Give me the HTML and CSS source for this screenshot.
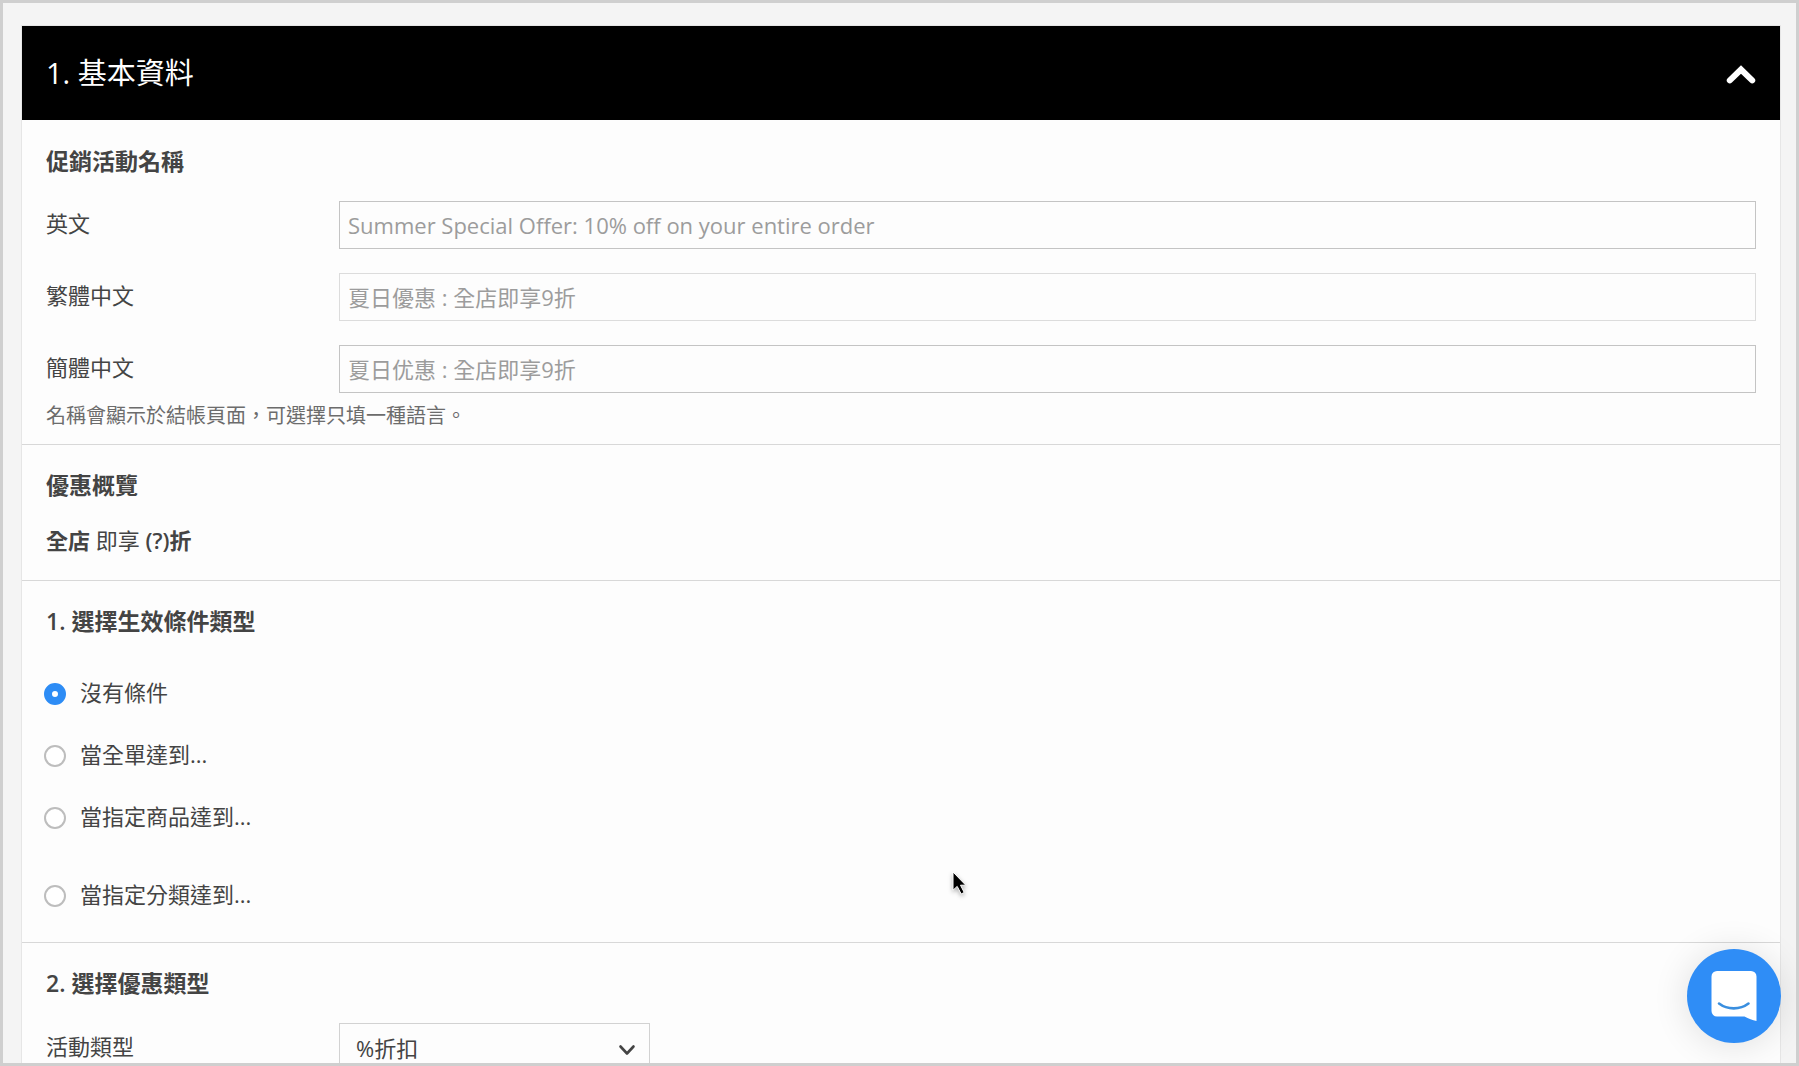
FILE: index.html
```html
<!DOCTYPE html>
<html lang="zh-Hant">
<head>
<meta charset="utf-8">
<meta name="viewport" content="width=device-width, initial-scale=1">
<title>基本資料</title>
<link rel="stylesheet" href="styles.css">
</head>
<body>
<main class="frame">
  <form class="panel">
    <header class="panel-header">
      <h1 class="panel-title">1. 基本資料</h1>
      <button class="collapse" type="button" aria-label="收合">
        <svg width="30" height="20" viewBox="0 0 30 20" aria-hidden="true"><path d="M3.800 15.400 15 4.500 26.200 15.400" fill="none" stroke="#fff" stroke-width="6" stroke-linecap="round" stroke-linejoin="miter"/></svg>
      </button>
    </header>

    <section class="section names">
      <h2 class="heading">促銷活動名稱</h2>
      <div class="fields">
        <div class="row">
          <label class="label" for="name-en">英文</label>
          <input class="text-box" id="name-en" type="text" placeholder="Summer Special Offer: 10% off on your entire order">
        </div>
        <div class="row">
          <label class="label" for="name-tc">繁體中文</label>
          <input class="text-box light" id="name-tc" type="text" placeholder="夏日優惠 : 全店即享9折">
        </div>
        <div class="row">
          <label class="label" for="name-sc">簡體中文</label>
          <input class="text-box" id="name-sc" type="text" placeholder="夏日优惠 : 全店即享9折">
        </div>
      </div>
      <p class="hint">名稱會顯示於結帳頁面，可選擇只填一種語言。</p>
    </section>

    <section class="section overview">
      <h2 class="heading">優惠概覽</h2>
      <p class="summary"><strong>全店</strong> 即享 <strong>(?)折</strong></p>
    </section>

    <section class="section conditions">
      <h2 class="heading">1. 選擇生效條件類型</h2>
      <div class="options">
        <label class="option"><input class="radio" type="radio" name="condition" checked>沒有條件</label>
        <label class="option"><input class="radio" type="radio" name="condition">當全單達到...</label>
        <label class="option"><input class="radio" type="radio" name="condition">當指定商品達到...</label>
        <label class="option spaced"><input class="radio" type="radio" name="condition">當指定分類達到...</label>
      </div>
    </section>

    <section class="section">
      <h2 class="heading">2. 選擇優惠類型</h2>
      <div class="row">
        <label class="label" for="promo-type">活動類型</label>
        <div class="select-wrap">
          <select class="select" id="promo-type"><option>%折扣</option></select>
          <svg class="select-arrow" width="18" height="12" viewBox="0 0 18 12" aria-hidden="true"><path d="M2.500 2.500 9 9.500 15.500 2.500" fill="none" stroke="#444" stroke-width="2.600" stroke-linecap="round" stroke-linejoin="round"/></svg>
        </div>
      </div>
    </section>
  </form>

  <button class="chat" type="button" aria-label="線上客服">
    <svg width="46" height="50" viewBox="0 0 46 50" aria-hidden="true">
      <path d="M6 0h34a5.500 5.500 0 0 1 5.500 5.500V50c-4-.8-8-2.300-12-4.500H6A5.500 5.500 0 0 1 .5 40V5.500A5.500 5.500 0 0 1 6 0z" fill="#fff"/>
      <path d="M8 32.500c8.500 6.500 21 6.500 29.500 0" fill="none" stroke="#3a8fdf" stroke-width="2.600" stroke-linecap="round"/>
    </svg>
  </button>

  <svg class="cursor" width="20" height="28" viewBox="0 0 20 28" aria-hidden="true"><path d="M1 1v18.200l4.200-3.800 4 7.600 3-1.600-3.700-7.200h5.300z" fill="#000" stroke="#fff" stroke-width="1"/></svg>
</main>
</body>
</html>
```
FILE: styles.css
```css
* {
  box-sizing: border-box;
}

body {
  margin: 0;
  background: #f4f4f4;
  color: #444;
  font-family: "Open Sans", "Noto Sans CJK TC", sans-serif;
  font-size: 22px;
  line-height: 30px;
}

h1,
h2,
p {
  margin: 0;
}

button,
input,
select {
  font: inherit;
  color: inherit;
}

.frame {
  position: relative;
  height: 100vh;
  overflow: hidden;
  padding: 23px 16px 0 19px;
  border: 3px solid #cfcfcf;
}

.panel {
  background: #fdfdfd;
  box-shadow: 0 0 0 1px #e6e6e6;
}

.panel-header {
  display: flex;
  align-items: center;
  justify-content: space-between;
  height: 94px;
  padding: 0 24px;
  background: #000;
  color: #fff;
}

.panel-title {
  font-size: 29px;
  font-weight: 400;
  line-height: 40px;
}

.collapse {
  display: flex;
  padding: 4px 0 0;
  border: 0;
  background: none;
}

.section {
  padding: 24px;
  border-bottom: 1px solid #d8d8d8;
}

.heading {
  margin-bottom: 24px;
  font-size: 23px;
  font-weight: 600;
  line-height: 32px;
}

.fields {
  display: grid;
  gap: 24px;
}

.row {
  display: grid;
  grid-template-columns: 293px 1fr;
  align-items: center;
}

.label {
  padding-bottom: 4px;
}

.text-box {
  width: 100%;
  height: 48px;
  padding: 0 8px;
  border: 1px solid #c4c4c4;
  border-radius: 0;
  background: #fdfdfd;
}

.text-box.light {
  border-color: #dcdcdc;
}

.text-box::placeholder {
  color: #9c9c9c;
  opacity: 1;
}

.names {
  padding: 25px 24px 14px;
}

.hint {
  margin-top: 9px;
  color: #6c6c6c;
  font-size: 20px;
  line-height: 28px;
}

.overview {
  padding-bottom: 25px;
}

.summary strong {
  font-weight: 600;
}

.conditions {
  padding-bottom: 35px;
}

.options {
  display: grid;
  gap: 36px;
  padding-top: 18px;
}

.option {
  display: flex;
  align-items: flex-end;
  gap: 14px;
  margin-left: -2px;
  line-height: 26px;
}

.option.spaced {
  margin-top: 16px;
}

.radio {
  appearance: none;
  flex: none;
  width: 22px;
  height: 22px;
  margin: 0;
  border: 2px solid #bdbdbd;
  border-radius: 50%;
  background: #fff;
}

.radio:checked {
  border: 8px solid #2d8cf5;
}

.select-wrap {
  display: grid;
  align-items: center;
  width: 311px;
}

.select,
.select-arrow {
  grid-area: 1 / 1;
}

.select {
  appearance: none;
  width: 100%;
  height: 50px;
  padding: 0 40px 0 16px;
  border: 1px solid #d2d2d2;
  border-radius: 0;
  background: #fdfdfd;
}

.select-arrow {
  justify-self: end;
  margin: 4px 14px 0 0;
  pointer-events: none;
}

.chat {
  position: absolute;
  right: 15px;
  bottom: 20px;
  display: flex;
  align-items: center;
  justify-content: center;
  width: 94px;
  height: 94px;
  padding: 0;
  border: 0;
  border-radius: 50%;
  background: #2f8df6;
  box-shadow: 0 2px 36px rgba(0, 0, 0, 0.12);
}

.cursor {
  position: absolute;
  left: 949px;
  top: 868px;
  filter: drop-shadow(0 2px 2px rgba(0, 0, 0, 0.3));
}
```
